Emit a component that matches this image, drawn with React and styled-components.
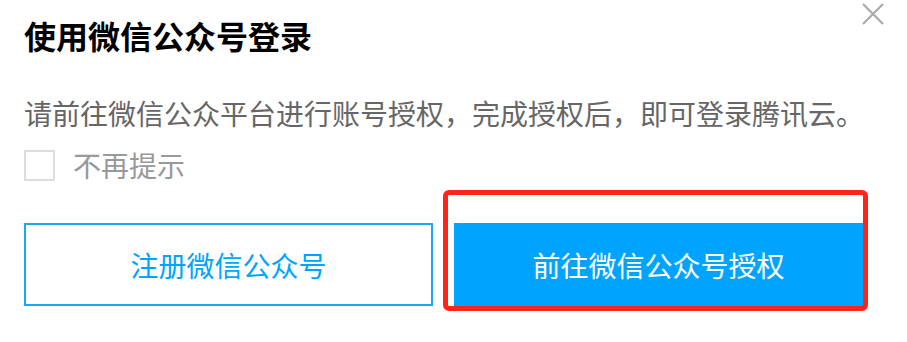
import React from 'react';
import styled, { createGlobalStyle } from 'styled-components';

const GlobalStyle = createGlobalStyle`
  html, body {
    margin: 0;
    padding: 0;
    background: #fff;
  }
  body {
    font-family: "Noto Sans CJK SC", "Noto Sans", "Liberation Sans", sans-serif;
  }
`;

const Dialog = styled.div`
  position: relative;
  box-sizing: border-box;
  width: 907px;
  height: 342px;
  padding: 16px 44px 0 24px;
  background: #fff;
`;

const CloseButton = styled.button`
  position: absolute;
  top: 3px;
  right: 23px;
  width: 22px;
  height: 22px;
  padding: 0;
  border: 0;
  background: transparent;
  cursor: pointer;
`;

const Title = styled.h2`
  margin: 0;
  font-size: 32px;
  line-height: 38px;
  font-weight: 700;
  color: #000;
`;

const Description = styled.p`
  margin: 43px 0 0;
  font-size: 28px;
  line-height: 32px;
  color: #666;
  white-space: nowrap;
`;

const CheckRow = styled.label`
  display: flex;
  align-items: center;
  gap: 18px;
  margin-top: 20px;
  font-size: 28px;
  line-height: 32px;
  color: #999;
`;

const Box = styled.span`
  box-sizing: border-box;
  width: 31px;
  height: 31px;
  border: 2px solid #ddd;
  background: #fff;
`;

const Actions = styled.div`
  display: grid;
  grid-template-columns: 1fr 1fr;
  gap: 21px;
  margin-top: 42px;
`;

const Slot = styled.div`
  position: relative;
`;

const Button = styled.button`
  box-sizing: border-box;
  width: 100%;
  height: 83px;
  border: 2px solid ${p => (p.$primary ? '#00a4ff' : '#1aa8f6')};
  background: ${p => (p.$primary ? '#00a4ff' : '#fff')};
  color: ${p => (p.$primary ? '#fff' : '#00a4ff')};
  font-family: inherit;
  font-size: 28px;
  cursor: pointer;
`;

const Highlight = styled.span`
  position: absolute;
  top: -33px;
  left: -11px;
  right: -5px;
  bottom: -5px;
  border: 5px solid #ff2418;
  border-radius: 6px;
  pointer-events: none;
`;

export default function App() {
  return (
    <>
      <GlobalStyle />
      <Dialog>
        <CloseButton aria-label="关闭">
          <svg width="22" height="22" viewBox="0 0 22 22">
            <path d="M1 1 L21 21 M21 1 L1 21" stroke="#aaa" strokeWidth="2.2" fill="none" />
          </svg>
        </CloseButton>
        <Title>使用微信公众号登录</Title>
        <Description>请前往微信公众平台进行账号授权，完成授权后，即可登录腾讯云。</Description>
        <CheckRow>
          <Box />
          不再提示
        </CheckRow>
        <Actions>
          <Slot>
            <Button>注册微信公众号</Button>
          </Slot>
          <Slot>
            <Button $primary>前往微信公众号授权</Button>
            <Highlight />
          </Slot>
        </Actions>
      </Dialog>
    </>
  );
}
